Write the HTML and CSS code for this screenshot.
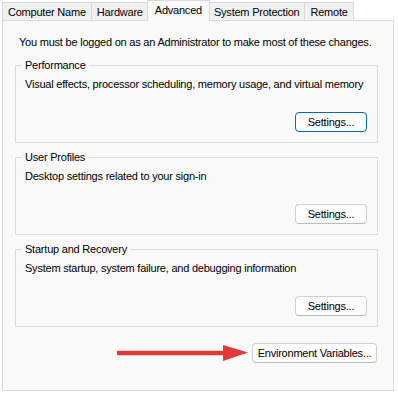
FILE: index.html
```html
<!DOCTYPE html>
<html>
<head>
<meta charset="utf-8">
<link rel="stylesheet" href="styles.css">
</head>
<body>
<div class="dialog">
  <div class="tabs">
    <div class="tab">Computer Name</div>
    <div class="tab">Hardware</div>
    <div class="tab active">Advanced</div>
    <div class="tab">System Protection</div>
    <div class="tab">Remote</div>
  </div>
  <div class="panel">
    <p class="intro">You must be logged on as an Administrator to make most of these changes.</p>
    <fieldset class="group">
      <legend>Performance</legend>
      <p class="desc">Visual effects, processor scheduling, memory usage, and virtual memory</p>
      <div class="actions"><button class="btn default">Settings...</button></div>
    </fieldset>
    <fieldset class="group">
      <legend>User Profiles</legend>
      <p class="desc">Desktop settings related to your sign-in</p>
      <div class="actions"><button class="btn">Settings...</button></div>
    </fieldset>
    <fieldset class="group">
      <legend>Startup and Recovery</legend>
      <p class="desc">System startup, system failure, and debugging information</p>
      <div class="actions"><button class="btn">Settings...</button></div>
    </fieldset>
    <div class="env-row">
      <svg class="arrow" width="131" height="18" viewBox="0 0 131 18">
        <line x1="1" y1="9" x2="110" y2="9" stroke="#e53935" stroke-width="4.5" stroke-linecap="round"/>
        <polygon points="106,1 131,8.5 106,17" fill="#e53935"/>
      </svg>
      <button class="btn env">Environment Variables...</button>
    </div>
  </div>
</div>
</body>
</html>
```
FILE: styles.css
```css
html, body {
  margin: 0;
  padding: 0;
  background: #ffffff;
}
body {
  font-family: "Liberation Sans", Arial, sans-serif;
  font-size: 11px;
  letter-spacing: -0.22px;
  color: #000;
}
.dialog {
  padding-left: 2px;
  width: 392px;
}
.tabs {
  display: flex;
  align-items: flex-end;
  height: 20px;
}
.tab {
  box-sizing: border-box;
  height: 18px;
  padding: 1px 5px 0;
  line-height: 16px;
  background: #f0f0f0;
  border: 1px solid #dadada;
  border-bottom: none;
  margin-right: -1px;
  white-space: nowrap;
}
.tab.active {
  height: 21px;
  padding: 0 7px;
  line-height: 18px;
  margin-bottom: -1px;
  margin-left: -1px;
  margin-right: -2px;
  background: #f9f9f9;
  position: relative;
  z-index: 1;
}
.panel {
  box-sizing: border-box;
  height: 371px;
  background: #f9f9f9;
  border: 1px solid #dadada;
  padding: 14px 15px 0 12px;
}
.intro {
  margin: 0 0 9px 4px;
  line-height: 15px;
  white-space: nowrap;
}
.group {
  margin: 0 0 8px 0;
  padding: 6px 10px 10px 9px;
  border: 1px solid #dcdcdc;
  min-inline-size: 0;
}
.group legend {
  padding: 0 3px;
  margin-left: -3px;
  line-height: 12px;
}
.desc {
  margin: 0;
  line-height: 15px;
  white-space: nowrap;
}
.actions {
  display: flex;
  justify-content: flex-end;
  margin-top: 20px;
}
.btn {
  box-sizing: border-box;
  height: 20px;
  font-family: inherit;
  font-size: 11px;
  letter-spacing: -0.22px;
  color: #000;
  background: #fdfdfd;
  border: 1px solid #d0d0d0;
  border-bottom-color: #bcbcbc;
  border-radius: 4px;
  padding: 0;
  line-height: 18px;
}
.actions .btn {
  width: 72px;
}
.btn.default {
  border: 1px solid #0067c0;
}
.env-row {
  display: flex;
  justify-content: flex-end;
  align-items: center;
  margin-top: 16px;
  margin-right: 1px;
}
.arrow {
  display: block;
  margin-right: 4px;
}
.btn.env {
  width: 125px;
}
```
